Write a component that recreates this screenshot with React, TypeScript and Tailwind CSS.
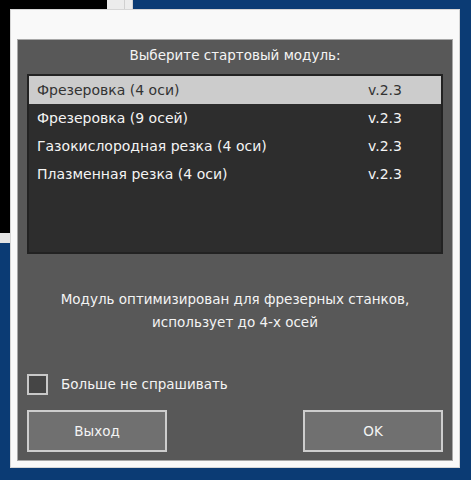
const modules = [
  { name: 'Фрезеровка (4 оси)', version: 'v.2.3' },
  { name: 'Фрезеровка (9 осей)', version: 'v.2.3' },
  { name: 'Газокислородная резка (4 оси)', version: 'v.2.3' },
  { name: 'Плазменная резка (4 оси)', version: 'v.2.3' },
]

export default function App() {
  const selected = 0

  return (
    <div
      className="relative w-[471px] h-[480px] overflow-hidden bg-[#0b3b74]"
      style={{ fontFamily: '"DejaVu Sans", "Noto Sans", sans-serif' }}
    >
      {/* desktop behind the dialog */}
      <div className="absolute left-0 top-0 w-[107px] h-[233px] bg-black" />
      <div className="absolute left-0 top-[233px] w-[20px] h-[10px] bg-[#e4e4e4]" />
      <div className="absolute left-[107px] top-0 w-[26px] h-[10px] bg-[#ececec] border-r border-[#d4d4d4]">
        <div className="absolute left-[17px] top-0 h-full w-px bg-[#d0d0d0]" />
      </div>

      {/* dialog window */}
      <div className="absolute left-[10px] top-[9px] w-[450px] h-[459px] bg-[#f9f9f9] border border-[#d6d6d6] pt-[29px] px-[6px]">
        <div className="flex flex-col h-[422px] bg-[#585858] border border-[#a8a8a8] px-[9px] pt-[5px] pb-[8px] text-[13.5px] text-[#f4f4f4]">
          <div className="h-[20px] leading-[20px] text-center">Выберите стартовый модуль:</div>

          <div className="mt-[9px] h-[180px] bg-[#2d2d2d] border-2 border-[#222222] text-[14px]">
            {modules.map((m, i) => (
              <div
                key={m.name}
                className={
                  'flex h-[28px] items-center leading-[28px] ' +
                  (i === selected ? 'bg-[#cccccc] text-[#333333]' : 'text-[#f4f4f4]')
                }
              >
                <span className="w-[339px] shrink-0 pl-[8px]">{m.name}</span>
                <span>{m.version}</span>
              </div>
            ))}
          </div>

          <div className="mt-[34px] leading-[23px] text-center">
            Модуль оптимизирован для фрезерных станков,
            <br />
            использует до 4-х осей
          </div>

          <label className="mt-[40px] flex items-center gap-[13px] h-[21px]">
            <span className="w-[21px] h-[21px] border-2 border-[#c8c8c8] bg-[#454545]" />
            <span>Больше не спрашивать</span>
          </label>

          <div className="mt-[15px] flex justify-between">
            <button className="w-[140px] h-[42px] border-2 border-[#cdcdcd] bg-[#707070] text-[#f4f4f4]">
              Выход
            </button>
            <button className="w-[140px] h-[42px] border-2 border-[#cdcdcd] bg-[#707070] text-[#f4f4f4]">
              OK
            </button>
          </div>
        </div>
      </div>
    </div>
  )
}
